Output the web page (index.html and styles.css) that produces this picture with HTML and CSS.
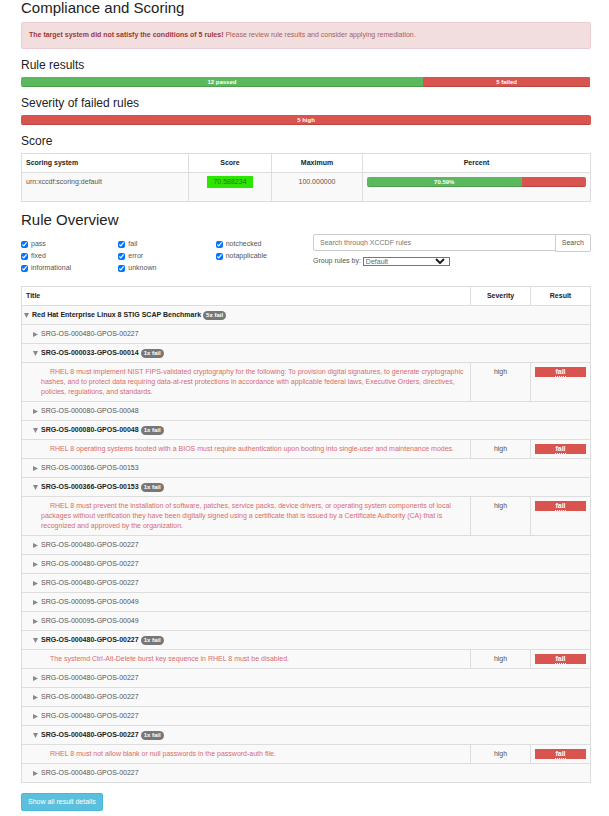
FILE: index.html
```html
<!DOCTYPE html>
<html lang="en">
<head>
<meta charset="utf-8">
<title>Compliance and Scoring</title>
<link rel="stylesheet" href="styles.css">
</head>
<body>
<svg class="defs" aria-hidden="true">
  <symbol id="right" viewBox="0 0 5 6"><path d="M0 1 5 3.5 0 6Z" fill="currentColor"/></symbol>
  <symbol id="down" viewBox="0 0 5 6"><path d="M0 1H5L2.500 6Z" fill="currentColor"/></symbol>
</svg>
<main class="report">
  <section>
    <h2>Compliance and Scoring</h2>
    <div class="alert"><strong>The target system did not satisfy the conditions of 5 rules!</strong> Please review rule results and consider applying remediation.</div>

    <h3>Rule results</h3>
    <div class="progress">
      <div class="bar bar-pass" style="width:70.5%">12 passed</div>
      <div class="bar bar-fail" style="width:29.4%">5 failed</div>
    </div>

    <h3>Severity of failed rules</h3>
    <div class="progress">
      <div class="bar bar-fail" style="width:100%">5 high</div>
    </div>

    <h3>Score</h3>
    <table class="grid score">
      <colgroup><col class="c-system"><col class="c-score"><col class="c-max"><col></colgroup>
      <thead><tr><th class="left">Scoring system</th><th>Score</th><th>Maximum</th><th>Percent</th></tr></thead>
      <tbody><tr>
        <td>urn:xccdf:scoring:default</td>
        <td class="center"><mark>70.588234</mark></td>
        <td class="center">100.000000</td>
        <td><div class="progress">
          <div class="bar bar-pass" style="width:70.59%">70.59%</div>
          <div class="bar bar-fail" style="width:29.41%"></div>
        </div></td>
      </tr></tbody>
    </table>
  </section>

  <section>
    <h2 class="overview-title">Rule Overview</h2>
    <form class="filters">
      <div class="checks">
        <label><input type="checkbox" checked>pass</label>
        <label><input type="checkbox" checked>fail</label>
        <label><input type="checkbox" checked>notchecked</label>
        <label><input type="checkbox" checked>fixed</label>
        <label><input type="checkbox" checked>error</label>
        <label><input type="checkbox" checked>notapplicable</label>
        <label><input type="checkbox" checked>informational</label>
        <label><input type="checkbox" checked>unknown</label>
      </div>
      <div class="search-side">
        <div class="search">
          <input type="text" placeholder="Search through XCCDF rules" aria-label="Search through XCCDF rules">
          <button type="button">Search</button>
        </div>
        <div class="group-by">
          <label for="group">Group rules by:</label>
          <span class="select">
            <select id="group"><option>Default</option></select>
            <svg viewBox="0 0 10 6" aria-hidden="true"><path d="M1 1 5 5 9 1" fill="none" stroke="#222" stroke-width="2"/></svg>
          </span>
        </div>
      </div>
    </form>

    <table class="grid rules">
      <colgroup><col><col class="c-side"><col class="c-side"></colgroup>
      <thead><tr><th class="left">Title</th><th>Severity</th><th>Result</th></tr></thead>
      <tbody>
        <tr><td colspan="3" class="root"><a class="open" href="#"><svg><use href="#down"/></svg>Red Hat Enterprise Linux 8 STIG SCAP Benchmark</a> <span class="badge">5x fail</span></td></tr>
        <tr><td colspan="3" class="group"><a href="#"><svg><use href="#right"/></svg>SRG-OS-000480-GPOS-00227</a></td></tr>
        <tr><td colspan="3" class="group"><a class="open" href="#"><svg><use href="#down"/></svg>SRG-OS-000033-GPOS-00014</a> <span class="badge">1x fail</span></td></tr>
        <tr><td class="rule"><a href="#">RHEL 8 must implement NIST FIPS-validated cryptography for the following: To provision digital signatures, to generate cryptographic hashes, and to protect data requiring data-at-rest protections in accordance with applicable federal laws, Executive Orders, directives, policies, regulations, and standards.</a></td><td class="center">high</td><td class="center"><div class="result"><abbr>fail</abbr></div></td></tr>
        <tr><td colspan="3" class="group"><a href="#"><svg><use href="#right"/></svg>SRG-OS-000080-GPOS-00048</a></td></tr>
        <tr><td colspan="3" class="group"><a class="open" href="#"><svg><use href="#down"/></svg>SRG-OS-000080-GPOS-00048</a> <span class="badge">1x fail</span></td></tr>
        <tr><td class="rule"><a href="#">RHEL 8 operating systems booted with a BIOS must require authentication upon booting into single-user and maintenance modes.</a></td><td class="center">high</td><td class="center"><div class="result"><abbr>fail</abbr></div></td></tr>
        <tr><td colspan="3" class="group"><a href="#"><svg><use href="#right"/></svg>SRG-OS-000366-GPOS-00153</a></td></tr>
        <tr><td colspan="3" class="group"><a class="open" href="#"><svg><use href="#down"/></svg>SRG-OS-000366-GPOS-00153</a> <span class="badge">1x fail</span></td></tr>
        <tr><td class="rule"><a href="#">RHEL 8 must prevent the installation of software, patches, service packs, device drivers, or operating system components of local packages without verification they have been digitally signed using a certificate that is issued by a Certificate Authority (CA) that is recognized and approved by the organization.</a></td><td class="center">high</td><td class="center"><div class="result"><abbr>fail</abbr></div></td></tr>
        <tr><td colspan="3" class="group"><a href="#"><svg><use href="#right"/></svg>SRG-OS-000480-GPOS-00227</a></td></tr>
        <tr><td colspan="3" class="group"><a href="#"><svg><use href="#right"/></svg>SRG-OS-000480-GPOS-00227</a></td></tr>
        <tr><td colspan="3" class="group"><a href="#"><svg><use href="#right"/></svg>SRG-OS-000480-GPOS-00227</a></td></tr>
        <tr><td colspan="3" class="group"><a href="#"><svg><use href="#right"/></svg>SRG-OS-000095-GPOS-00049</a></td></tr>
        <tr><td colspan="3" class="group"><a href="#"><svg><use href="#right"/></svg>SRG-OS-000095-GPOS-00049</a></td></tr>
        <tr><td colspan="3" class="group"><a class="open" href="#"><svg><use href="#down"/></svg>SRG-OS-000480-GPOS-00227</a> <span class="badge">1x fail</span></td></tr>
        <tr><td class="rule"><a href="#">The systemd Ctrl-Alt-Delete burst key sequence in RHEL 8 must be disabled.</a></td><td class="center">high</td><td class="center"><div class="result"><abbr>fail</abbr></div></td></tr>
        <tr><td colspan="3" class="group"><a href="#"><svg><use href="#right"/></svg>SRG-OS-000480-GPOS-00227</a></td></tr>
        <tr><td colspan="3" class="group"><a href="#"><svg><use href="#right"/></svg>SRG-OS-000480-GPOS-00227</a></td></tr>
        <tr><td colspan="3" class="group"><a href="#"><svg><use href="#right"/></svg>SRG-OS-000480-GPOS-00227</a></td></tr>
        <tr><td colspan="3" class="group"><a class="open" href="#"><svg><use href="#down"/></svg>SRG-OS-000480-GPOS-00227</a> <span class="badge">1x fail</span></td></tr>
        <tr><td class="rule"><a href="#">RHEL 8 must not allow blank or null passwords in the password-auth file.</a></td><td class="center">high</td><td class="center"><div class="result"><abbr>fail</abbr></div></td></tr>
        <tr><td colspan="3" class="group"><a href="#"><svg><use href="#right"/></svg>SRG-OS-000480-GPOS-00227</a></td></tr>
      </tbody>
    </table>
    <button type="button" class="show-all">Show all result details</button>
  </section>
</main>
</body>
</html>
```
FILE: styles.css
```css
* { box-sizing: border-box; }
body {
  margin: 0;
  background: #fff;
  color: #555;
  font: 7px/10px "Liberation Sans", Arial, sans-serif;
}
.defs { display: none; }
.report { padding: 0 18px 4px 21px; }
h2, h3 { margin: 0; font-weight: 400; color: #222; }
h2 { font-size: 15px; line-height: 15px; margin-bottom: 7px; }
h3 { font-size: 12px; line-height: 14px; margin: 9px 0 5px; }
.alert {
  padding: 7px;
  min-height: 27px;
  border: 1px solid #ebccd1;
  border-radius: 2px;
  background: #f2dede;
  color: #a9605f;
}
.alert strong { color: #a03836; }
.progress {
  display: flex;
  height: 10px;
  overflow: hidden;
  border-radius: 2px;
}
.bar {
  color: #fff;
  font-size: 6px;
  font-weight: 700;
  line-height: 10px;
  text-align: center;
  box-shadow: inset 0 -1px 0 rgba(0, 0, 0, .15);
}
.bar-pass { background: #5cb85c; }
.bar-fail { background: #d9534f; }

.grid {
  width: 100%;
  border-collapse: collapse;
  table-layout: fixed;
}
.grid th, .grid td {
  padding: 4px;
  border: 1px solid #ddd;
  vertical-align: top;
  text-align: left;
}
.grid th { text-align: center; color: #222; }
.grid th.left { text-align: left; }
.grid td { background: #f9f9f9; }
.grid td.center { text-align: center; }
.c-system { width: 167px; }
.c-score { width: 83px; }
.c-max { width: 91px; }
.c-side { width: 60px; }
.score td { height: 29px; }
mark {
  display: inline-block;
  margin: -1px 0;
  padding: 1px 6px;
  background: #2be600;
  color: #34701f;
}

.overview-title { margin: 10px 0 7px; }
.filters {
  display: grid;
  grid-template-columns: 292fr 278fr;
  margin-bottom: 12px;
}
.checks {
  display: grid;
  grid-template-columns: repeat(3, 1fr);
  grid-auto-rows: 12px;
  align-content: start;
  padding-top: 4px;
}
.checks label { display: flex; align-items: center; gap: 3px; }
.checks input { width: 7px; height: 7px; margin: 0; accent-color: #0075ff; }
.search { display: flex; align-items: flex-start; }
.search input {
  flex: 1;
  min-width: 0;
  height: 17px;
  padding: 0 6px;
  border: 1px solid #ccc;
  border-radius: 2px 0 0 2px;
  font: inherit;
}
.search input::placeholder { color: #777; }
.search button {
  height: 18px;
  margin-left: -1px;
  padding: 0 6px;
  border: 1px solid #ccc;
  border-radius: 0 2px 2px 0;
  background: #fff;
  color: #555;
  font: inherit;
}
.group-by { display: flex; align-items: center; gap: 2px; margin-top: 4px; }
.select { position: relative; display: flex; }
.select select {
  appearance: none;
  width: 87px;
  height: 9px;
  padding: 0 2px;
  border: 1px solid #767676;
  border-radius: 0;
  background: #fff;
  color: #666;
  font: 7px/7px "Liberation Sans", Arial, sans-serif;
}
.select svg {
  position: absolute;
  top: 1px;
  right: 5px;
  width: 10px;
  height: 6px;
  pointer-events: none;
}

.rules a { color: #555; text-decoration: none; }
.rules a.open { color: #222; font-weight: 700; }
.rules a svg {
  width: 5px;
  height: 6px;
  margin-right: 3px;
  color: #888;
  vertical-align: -1px;
}
.rules .root { padding-left: 2px; }
.rules .group { padding-left: 11px; }
.rules .rule { padding-left: 19px; text-indent: 9px; }
.rules .rule a { color: #d96a6c; }
.badge {
  display: inline-block;
  padding: 0 3px;
  border-radius: 5px;
  background: #777;
  color: #fff;
  font-size: 6px;
  font-weight: 700;
  line-height: 9px;
  vertical-align: middle;
}
.grid .badge { margin: -1px 0; }
.result { background: #d9534f; color: #fff; font-weight: 700; }
.result abbr {
  display: inline-block;
  border-bottom: 1px dotted #fff;
  line-height: 9px;
  vertical-align: top;
}
.show-all {
  display: block;
  height: 18px;
  margin-top: 10px;
  padding: 0 6px;
  border: 1px solid #46b8da;
  border-radius: 2px;
  background: #5bc0de;
  color: #fff;
  font: inherit;
}
```
